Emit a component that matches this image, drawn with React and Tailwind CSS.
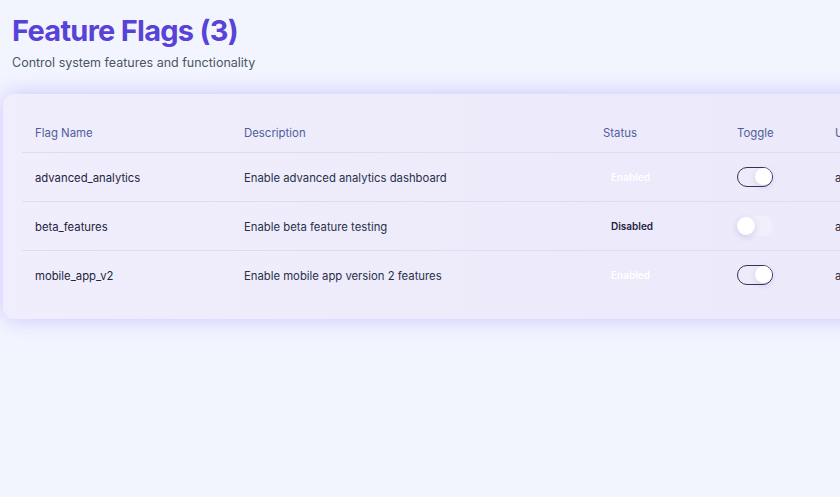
import React from "react";

const rows = [
  { name: "advanced_analytics", desc: "Enable advanced analytics dashboard", on: true, by: "admin" },
  { name: "beta_features", desc: "Enable beta feature testing", on: false, by: "admin" },
  { name: "mobile_app_v2", desc: "Enable mobile app version 2 features", on: true, by: "admin" },
];

function Toggle({ on }) {
  return on ? (
    <div className="relative h-[20px] w-[36px] rounded-full border-[1.5px] border-[#2e3658] bg-[#eeebfa]">
      <div className="absolute right-[0px] top-[0px] h-[17px] w-[17px] rounded-full bg-white shadow-[0_2px_6px_rgba(60,50,120,0.15)]" />
    </div>
  ) : (
    <div className="relative h-[20px] w-[36px] rounded-full bg-[#f1effb]">
      <div className="absolute left-[0px] top-[1px] h-[18px] w-[18px] rounded-full bg-white shadow-[0_2px_6px_rgba(60,50,120,0.18)]" />
    </div>
  );
}

export default function App() {
  return (
    <div className="h-[497px] w-[840px] overflow-hidden bg-[#f3f5fe] font-['Inter',sans-serif]">
      <div className="px-[12px] pt-[14px]">
        <h1 className="text-[29px] font-bold leading-[34px] tracking-tight text-[#5943d6]">Feature Flags (3)</h1>
        <p className="mt-[6px] text-[12.5px] leading-[18px] text-[#4b5563]">Control system features and functionality</p>
      </div>
      <div className="ml-[3px] mt-[22px] w-[1000px] rounded-[12px] bg-gradient-to-r from-[#f0eefc] to-[#ebe8fa] px-[19px] pb-[20px] pt-[21px] shadow-[0_0_22px_rgba(124,102,255,0.35)]">
        <table className="w-[962px] table-fixed border-collapse whitespace-nowrap text-left text-[11.3px]">
          <thead>
            <tr className="h-[37px] border-b border-[#dfdcef]">
              <th className="w-[209px] px-[13px] pt-[1px] text-[11.4px] font-normal text-[#4f5e9c]">Flag Name</th>
              <th className="w-[359px] px-[13px] pt-[1px] text-[11.4px] font-normal text-[#4f5e9c]">Description</th>
              <th className="w-[134px] px-[13px] pt-[1px] text-[11.4px] font-normal text-[#4f5e9c]">Status</th>
              <th className="w-[98px] px-[13px] pt-[1px] text-[11.4px] font-normal text-[#4f5e9c]">Toggle</th>
              <th className="px-[13px] pt-[1px] text-[11.4px] font-normal text-[#4f5e9c]">Updated By</th>
            </tr>
          </thead>
          <tbody>
            {rows.map((r, i) => (
              <tr key={r.name} className={"h-[49px] " + (i < rows.length - 1 ? "border-b border-[#dfdcef]" : "")}>
                <td className="px-[13px] pt-[3px] text-[#1e2340]">{r.name}</td>
                <td className="px-[13px] pt-[3px] text-[#2a2f4a]">{r.desc}</td>
                <td className="px-[13px] pt-[2px]">
                  {r.on ? (
                    <span className="px-[8px] text-[10px] font-semibold text-white">Enabled</span>
                  ) : (
                    <span className="px-[8px] text-[10px] font-semibold text-[#1e2340]">Disabled</span>
                  )}
                </td>
                <td className="px-[13px]">
                  <Toggle on={r.on} />
                </td>
                <td className="px-[13px] pt-[3px] text-[#2a2f4a]">{r.by}</td>
              </tr>
            ))}
          </tbody>
        </table>
      </div>
    </div>
  );
}
